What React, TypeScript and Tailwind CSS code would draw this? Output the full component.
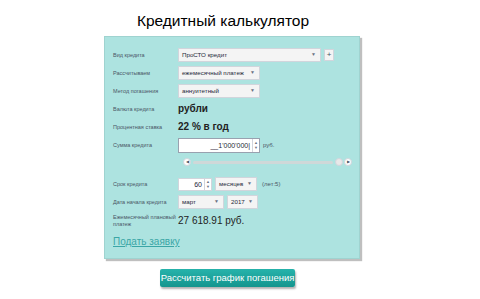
import React from "react"

const font = { fontFamily: '"Liberation Sans", Arial, sans-serif' }

function Caret() {
  return <span className="text-[5px] text-gray-500">▼</span>
}

function Select({ value, w }: { value: string; w: string }) {
  return (
    <div className={`flex h-[14px] items-center justify-between border border-gray-300 bg-[#f4f4f4] pl-[3px] pr-[4px] ${w}`}>
      <span className="whitespace-nowrap text-[6.2px] leading-none text-gray-800">{value}</span>
      <Caret />
    </div>
  )
}

function Spinner() {
  return (
    <div className="flex h-full w-[7px] flex-col items-center justify-center border-l border-gray-300 text-[4px] leading-[5px] text-gray-500">
      <span>▲</span>
      <span>▼</span>
    </div>
  )
}

function Row({ label, children, h = "h-[18px]" }: { label: React.ReactNode; children?: React.ReactNode; h?: string }) {
  return (
    <div className={`flex items-center ${h}`}>
      <div className="w-[65px] whitespace-nowrap text-[5.5px] leading-[7px] text-gray-600">{label}</div>
      <div className="flex items-center gap-[3px]">{children}</div>
    </div>
  )
}

export default function App() {
  return (
    <div className="h-[299px] w-[480px] bg-white" style={font}>
      <div className="flex h-[36px] items-start justify-center pr-[34px] pt-[10px]">
        <h1 className="whitespace-nowrap text-[15.5px] leading-[22px] text-black">Кредитный калькулятор</h1>
      </div>
      <div className="ml-[104px] w-[256px] border border-[#9fd3d0] bg-[#ade3e0] pl-[8px] pr-[6px] pt-[9px] shadow-[2px_2px_1px_rgba(0,0,0,0.25)]">
        <Row label="Вид кредита">
          <Select value="ПроСТО кредит" w="w-[143px]" />
          <div className="flex h-[12px] w-[10px] items-center justify-center border border-gray-300 bg-[#f4f4f4] text-[8px] leading-none text-gray-600">+</div>
        </Row>
        <Row label="Рассчитываем">
          <Select value="ежемесячный платеж" w="w-[82px]" />
        </Row>
        <Row label="Метод погашения">
          <Select value="аннуитетный" w="w-[82px]" />
        </Row>
        <Row label="Валюта кредита">
          <span className="text-[10px] font-bold leading-none text-[#222]">рубли</span>
        </Row>
        <Row label="Процентная ставка">
          <span className="whitespace-nowrap text-[10px] font-bold leading-none text-[#222]">22 % в год</span>
        </Row>
        <Row label="Сумма кредита">
          <div className="flex h-[15px] w-[82px] items-center border border-gray-400 bg-white">
            <span className="flex-1 pr-[2px] text-right text-[7px] leading-none text-gray-800">__1'000'000|</span>
            <Spinner />
          </div>
          <span className="text-[6px] text-gray-600">руб.</span>
        </Row>
        <div className="flex h-[16px] items-center pl-[70px]">
          <div className="flex h-[8px] w-[8px] items-center justify-center rounded-full border border-gray-300 bg-white text-[4px] text-gray-600">◀</div>
          <div className="mx-[2px] h-[3px] w-[140px] rounded-full bg-[#cfd8d8]" />
          <div className="h-[8px] w-[8px] rounded-full border border-gray-300 bg-[#e8e8e8]" />
          <div className="ml-[1px] flex h-[8px] w-[8px] items-center justify-center rounded-full border border-gray-300 bg-white text-[4px] text-gray-600">▶</div>
        </div>
        <div className="h-[5px]" />
        <Row label="Срок кредита">
          <div className="flex h-[13px] w-[34px] items-center border border-gray-300 bg-white">
            <span className="flex-1 pr-[2px] text-right text-[7px] leading-none text-gray-800">60</span>
            <Spinner />
          </div>
          <Select value="месяцев" w="w-[42px]" />
          <span className="ml-[2px] text-[6px] text-gray-600">(лет:5)</span>
        </Row>
        <Row label="Дата начала кредита">
          <Select value="март" w="w-[46px]" />
          <Select value="2017" w="w-[31px]" />
        </Row>
        <Row label={<>Ежемесячный плановый<br />платеж</>} h="h-[20px]">
          <span className="whitespace-nowrap text-[10px] leading-none text-[#222]">27 618.91 руб.</span>
        </Row>
        <div className="flex h-[22px] items-center">
          <a className="text-[10px] leading-none text-[#3aa6a6] underline">Подать заявку</a>
        </div>
        <div className="h-[5px]" />
      </div>
      <div className="mt-[10px] flex justify-start pl-[160px]">
        <button className="h-[18px] w-[135px] whitespace-nowrap rounded-[2px] bg-gradient-to-b from-[#26b3ab] to-[#14958e] text-[9.5px] leading-none text-white shadow-[1px_2px_2px_rgba(0,0,0,0.3)]">
          Рассчитать график погашения
        </button>
      </div>
    </div>
  )
}
